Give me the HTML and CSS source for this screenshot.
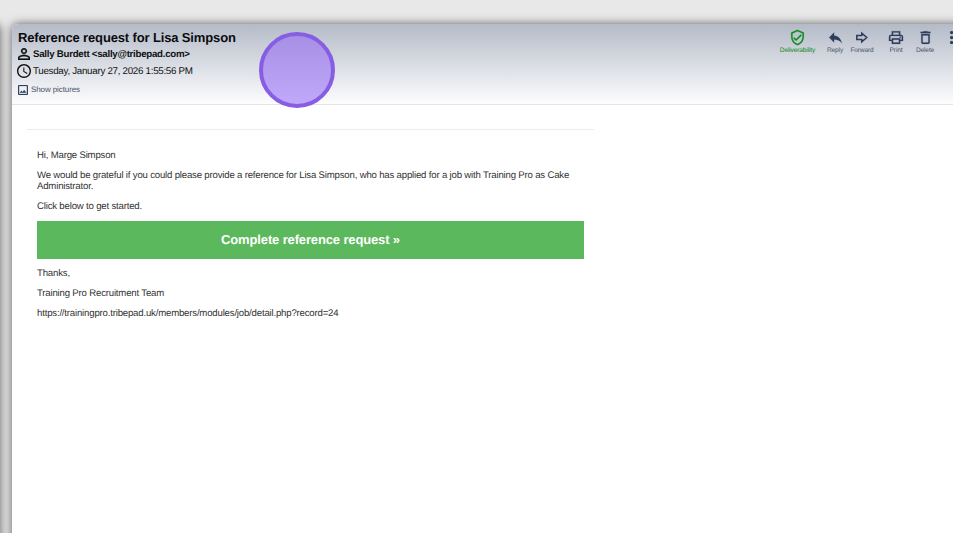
FILE: index.html
```html
<!DOCTYPE html>
<html lang="en">
<head>
<meta charset="utf-8">
<title>Reference request for Lisa Simpson</title>
<link rel="stylesheet" href="styles.css">
</head>
<body>
<div class="app">
  <aside class="list-pane"></aside>
  <main class="mail">
    <header class="mail-header">
      <div class="summary">
        <h1 class="subject">Reference request for Lisa Simpson</h1>
        <div class="sender"><svg class="icon person" viewBox="4 4 16 16"><path d="M12 5.9a2.1 2.1 0 1 1 0 4.200 2.100 2.100 0 0 1 0-4.200m0 9c2.970 0 6.100 1.460 6.100 2.100v1.100H5.900V17c0-.64 3.130-2.100 6.100-2.100M12 4C9.790 4 8 5.790 8 8s1.790 4 4 4 4-1.790 4-4-1.790-4-4-4zm0 9c-2.670 0-8 1.340-8 4v3h16v-3c0-2.660-5.330-4-8-4z"/></svg><span>Sally Burdett &lt;sally@tribepad.com&gt;</span></div>
        <div class="date"><svg class="icon clock" viewBox="2 2 20 20"><path d="M12 2C6.470 2 2 6.500 2 12s4.480 10 10 10 10-4.480 10-10S17.500 2 12 2zm0 18c-4.420 0-8-3.580-8-8s3.580-8 8-8 8 3.580 8 8-3.580 8-8 8zm.5-13H11v6l5.250 3.150.75-1.230-4.500-2.670z"/></svg><span>Tuesday, January 27, 2026 1:55:56 PM</span></div>
        <div class="pictures"><svg class="icon image" viewBox="3 3 18 18"><path d="M19 5v14H5V5h14m0-2H5a2 2 0 0 0-2 2v14a2 2 0 0 0 2 2h14a2 2 0 0 0 2-2V5a2 2 0 0 0-2-2zm-4.860 8.860l-3 3.870L9 13.140 6 17h12l-3.860-5.140z"/></svg><span>Show pictures</span></div>
      </div>
      <nav class="actions">
        <div class="action deliver"><svg class="icon" viewBox="0 0 24 24"><path d="M12 1L3 5v6c0 5.550 3.840 10.740 9 12 5.160-1.260 9-6.450 9-12V5l-9-4zm7 10c0 4.520-2.980 8.690-7 9.930-4.020-1.240-7-5.410-7-9.930V6.300l7-3.110 7 3.110V11zm-11.590.59L6 13l4 4 8-8-1.410-1.420L10 14.170z"/></svg><span>Deliverability</span></div>
        <div class="action reply"><svg class="icon" viewBox="0 0 24 24"><path d="M10 9V5l-7 7 7 7v-4.100c5 0 8.500 1.600 11 5.100-1-5-4-10-11-11z"/></svg><span>Reply</span></div>
        <div class="action forward"><svg class="icon" viewBox="0 0 24 24"><path class="outline" d="M4 9.200h7V5.800l7 6.200-7 6.200v-3.400H4z"/></svg><span>Forward</span></div>
        <div class="action print"><svg class="icon" viewBox="0 0 24 24"><path d="M19 8h-1V3H6v5H5c-1.660 0-3 1.340-3 3v6h4v4h12v-4h4v-6c0-1.660-1.340-3-3-3zM8 5h8v3H8V5zm8 12v2H8v-4h8v2zm2-2v-2H6v2H4v-4c0-.55.45-1 1-1h14c.55 0 1 .45 1 1v4h-2z"/><circle cx="18" cy="11.500" r="1"/></svg><span>Print</span></div>
        <div class="action delete"><svg class="icon" viewBox="0 0 24 24"><path d="M6 19c0 1.100.9 2 2 2h8c1.100 0 2-.9 2-2V7H6v12zM8 9h8v10H8V9zm7.500-5l-1-1h-5l-1 1H5v2h14V4z"/></svg><span>Delete</span></div>
        <div class="action more"><svg class="icon" viewBox="0 0 24 24"><circle cx="5" cy="5" r="2.200"/><circle cx="5" cy="12" r="2.200"/><circle cx="5" cy="19" r="2.200"/></svg></div>
      </nav>
    </header>
    <article class="message">
      <p>Hi, Marge Simpson</p>
      <p>We would be grateful if you could please provide a reference for Lisa Simpson, who has applied for a job with Training Pro as Cake<br>Administrator.</p>
      <p>Click below to get started.</p>
      <a class="cta"><span>Complete reference request »</span></a>
      <p>Thanks,</p>
      <p>Training Pro Recruitment Team</p>
      <p class="link">https://trainingpro.tribepad.uk/members/modules/job/detail.php?record=24</p>
    </article>
  </main>
  <div class="pointer"></div>
</div>
</body>
</html>
```

FILE: styles.css
```css
* { box-sizing: border-box; }
body {
  margin: 0;
  font-family: "Liberation Sans", Arial, sans-serif;
  text-rendering: geometricPrecision;
  background: #e8e8e8;
}
.app {
  position: relative;
  display: flex;
  gap: 12px;
  width: 953px;
  height: 533px;
  padding-top: 24px;
  overflow: hidden;
}
.list-pane {
  width: 20px;
  height: 560px;
  margin-left: -20px;
  flex: none;
  border-radius: 6px;
  box-shadow: 0 0 10px rgba(0, 0, 0, .6);
}
.mail {
  width: 980px;
  height: 560px;
  flex: none;
  background: #fff;
  border-radius: 6px 0 0 0;
  box-shadow: 0 0 10px rgba(0, 0, 0, .6);
}
.mail-header {
  display: flex;
  height: 81px;
  padding: 5px 0 0 6px;
  border-bottom: 1px solid #e4e4e6;
  border-radius: 6px 0 0 0;
  background: linear-gradient(#b4bbc8, #fdfdfe);
}
.summary { width: 756px; }
.icon { display: block; flex: none; fill: currentColor; }
.subject {
  margin: 0;
  font-size: 13px;
  line-height: 18px;
  letter-spacing: -.14px;
  color: #0b0b0e;
  white-space: nowrap;
}
.sender, .date, .pictures { display: flex; align-items: center; white-space: nowrap; }
.sender { height: 14px; font-size: 9.700px; letter-spacing: -.26px; font-weight: bold; color: #111; }
.person { width: 12px; height: 12px; margin: 0 3px 0 0; }
.date { height: 19px; font-size: 9.800px; letter-spacing: -.3px; color: #111; }
.date span { padding-top: 1px; }
.clock { width: 14px; height: 14px; margin: 0 2px 0 -1px; }
.pictures { height: 19px; font-size: 8px; letter-spacing: -.1px; color: #4a5268; }
.image { width: 10px; height: 10px; margin: 0 3px 0 0; color: #2f4160; }
.person, .image { stroke: currentColor; stroke-width: .3; }
.actions { display: flex; color: #2e3d5c; }
.action {
  display: flex;
  flex-direction: column;
  align-items: center;
  flex: none;
  font-size: 6.600px;
  line-height: 9px;
  letter-spacing: -.15px;
  white-space: nowrap;
}
.action .icon { width: 17px; height: 17px; stroke: currentColor; stroke-width: .2; }
.action .outline { fill: none; stroke-width: 2.200; }
.action span { color: #4b556b; }
.action.deliver { width: 47px; color: #108a1c; }
.deliver span { color: #108a1c; }
.reply { width: 28px; }
.forward { width: 26px; }
.print { width: 42px; }
.action.print .icon { width: 18px; }
.delete { width: 16px; }
.more { margin-left: 15px; }
.message {
  width: 567px;
  margin: 24px 0 0 15px;
  padding: 20px 10px 0;
  border-top: 1px solid #ececec;
  font-size: 9.600px;
  line-height: 11px;
  letter-spacing: -.18px;
  color: #333;
}
.message p { margin: 0 0 9px; white-space: nowrap; }
.cta {
  display: flex;
  align-items: center;
  justify-content: center;
  height: 38px;
  margin-bottom: 9px;
  padding-bottom: 2px;
  background: #5cb85c;
  color: #fff;
  font-size: 13px;
  font-weight: bold;
  letter-spacing: -.14px;
}
.pointer {
  position: absolute;
  left: 259px;
  top: 32px;
  width: 76px;
  height: 76px;
  border: 4px solid #875ee3;
  border-radius: 50%;
  background: linear-gradient(#a78fe5, #c0a9fa);
}
```
